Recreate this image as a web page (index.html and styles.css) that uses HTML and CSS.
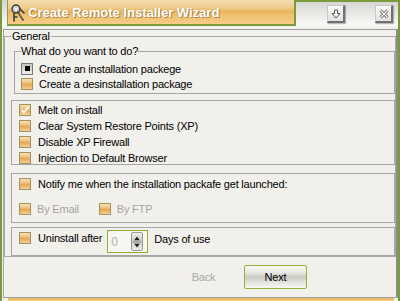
FILE: index.html
```html
<!DOCTYPE html>
<html>
<head>
<meta charset="utf-8">
<link rel="stylesheet" href="styles.css">
</head>
<body>
<div class="window">
  <div class="titlebar">
    <div class="tab">
      <svg class="appicon" width="14" height="18" viewBox="0 0 14 18">
        <circle cx="5" cy="5" r="4" fill="#c8c8c8" stroke="#3a3a3a" stroke-width="1.4"/>
        <circle cx="5" cy="5" r="1.6" fill="#f4f4f4"/>
        <path d="M3 9 L3 17 M3 13 L6 13 M7 8 L12 16 M9 5 L13 9" fill="none" stroke="#3a3a3a" stroke-width="1.6" stroke-linecap="round"/>
        <path d="M8 9 L12 15" fill="none" stroke="#9a9a9a" stroke-width="0.8"/>
      </svg>
      <span class="title">Create Remote Installer Wizard</span>
    </div>
    <div class="controls">
      <div class="tbtn">
        <svg width="10" height="10" viewBox="0 0 10 10"><path d="M3.5 1 H6.5 V4.5 H9 L5 9 L1 4.5 H3.5 Z" fill="#fff" stroke="#555" stroke-width="1"/></svg>
      </div>
      <div class="tbtn">
        <svg width="10" height="10" viewBox="0 0 10 10"><path d="M1.5 1.5 L8.5 8.5 M8.5 1.5 L1.5 8.5" stroke="#555" stroke-width="3"/><path d="M1.5 1.5 L8.5 8.5 M8.5 1.5 L1.5 8.5" stroke="#fff" stroke-width="1.4"/></svg>
      </div>
    </div>
  </div>
  <div class="panel">
    <fieldset class="general">
      <legend>General</legend>
      <fieldset class="what">
        <legend>What do you want to do?</legend>
        <div class="row radiorow"><span class="radio on"><span class="dot"></span></span><span>Create an installation packege</span></div>
        <div class="row radiorow"><span class="chk"></span><span>Create a desinstallation package</span></div>
      </fieldset>
      <div class="box options">
        <div class="row"><span class="chk checked"><svg width="10" height="10" viewBox="0 0 10 10"><path d="M1.5 5 L4 7.5 L8.5 2" fill="none" stroke="#fff" stroke-width="1.8"/></svg></span><span>Melt on install</span></div>
        <div class="row"><span class="chk"></span><span>Clear System Restore Points (XP)</span></div>
        <div class="row"><span class="chk"></span><span>Disable XP Firewall</span></div>
        <div class="row"><span class="chk"></span><span>Injection to Default Browser</span></div>
      </div>
      <div class="box notify">
        <div class="row"><span class="chk"></span><span>Notify me when the installation packafe get launched:</span></div>
        <div class="row sub">
          <span class="opt"><span class="chk"></span><span class="dis">By Email</span></span>
          <span class="opt"><span class="chk"></span><span class="dis">By FTP</span></span>
        </div>
      </div>
      <div class="box uninstall">
        <div class="row top"><span class="chk"></span><span>Uninstall after</span></div>
        <div class="spin">
          <span class="spinval">0</span>
          <span class="spinbtns">
            <svg width="11" height="18" viewBox="0 0 11 18"><path d="M2.5 7 L5.5 3 L8.5 7 Z M2.5 11 L5.5 15 L8.5 11 Z" fill="#222"/><path d="M1 9 H10" stroke="#888" stroke-width="1"/></svg>
          </span>
        </div>
        <span class="days">Days of use</span>
      </div>
    </fieldset>
    <div class="footer">
      <div class="btn back">Back</div>
      <div class="btn next">Next</div>
    </div>
  </div>
  <div class="strip"></div>
</div>
</body>
</html>
```
FILE: styles.css
```css
* { box-sizing: border-box; }
html, body { margin: 0; padding: 0; }
body {
  width: 400px;
  height: 301px;
  overflow: hidden;
  background: #f2f0eb;
  font-family: "Liberation Sans", Arial, sans-serif;
  font-size: 11px;
  letter-spacing: -0.2px;
  color: #000;
}
.window {
  height: 301px;
  display: flex;
  flex-direction: column;
  border-left: 2px solid #7b9a3c;
  border-right: 2px solid #7b9a3c;
}
.titlebar {
  height: 26px;
  display: flex;
  background: linear-gradient(#d4d4d0, #ebebe8 60%, #fbfbfa);
}
.tab {
  margin-left: 5px;
  width: 289px;
  height: 26px;
  display: flex;
  align-items: center;
  gap: 3px;
  padding-left: 3px;
  border-left: 1px solid #8a9a5a;
  border-right: 2px solid #7b9a3c;
  border-bottom: 2px solid #7b9a3c;
  background: linear-gradient(#f3dcae 0%, #f0cf90 30%, #e8b55c 48%, #f0c070 62%, #f7cd88 100%);
}
.appicon { margin-top: 1px; }
.title {
  font-weight: bold;
  font-size: 13px;
  letter-spacing: 0;
  color: #fff;
  text-shadow: 1px 1px 0 rgba(150, 110, 50, 0.7), -1px 0 0 rgba(170, 130, 70, 0.35);
}
.controls {
  flex: 1;
  display: flex;
  border-top: 2px solid #7b9a3c;
  padding: 3px 4px 0 31px;
  gap: 30px;
}
.tbtn {
  width: 18px;
  height: 18px;
  display: flex;
  align-items: center;
  justify-content: center;
  background: linear-gradient(#fafafa, #e2e2e0);
  border: 1px solid #c8c8c8;
  border-right: 2px solid #707070;
  border-bottom: 2px solid #707070;
  box-shadow: 1px 1px 1px rgba(0,0,0,0.25);
}
.panel {
  flex: 1;
  margin-top: 3px;
  margin-left: 1px;
  display: flex;
  flex-direction: column;
  border-top: 1px solid #9e9e9e;
  border-left: 1px solid #a6a6a6;
  border-bottom: 1px solid #a0a0a0;
  border-right: 2px solid #8c8c8c;
}
fieldset {
  margin: 0;
  min-width: 0;
}
legend {
  line-height: 13px;
  padding: 0 1px;
}
.general {
  border: 1px solid #a8a8a8;
  padding: 2px 0 0 6px;
}
.what {
  margin-left: 3px;
  border: 1px solid #a4a4a4;
  padding: 3px 0 2px 6px;
}
.what legend { padding: 0; }
.row {
  display: flex;
  align-items: center;
  gap: 7px;
  height: 12px;
  line-height: 12px;
  white-space: nowrap;
}
.radiorow { height: 15px; gap: 6px; }
.chk {
  width: 12px;
  height: 12px;
  flex: none;
  display: flex;
  align-items: center;
  justify-content: center;
  border: 1px solid #a09560;
  background: linear-gradient(#f8dfb4 0%, #efc484 35%, #e5a955 55%, #eebb74 80%, #f5d29a 100%);
}
.radio {
  width: 12px;
  height: 12px;
  flex: none;
  display: flex;
  align-items: center;
  justify-content: center;
  border: 1px solid #7a7a7a;
  background: linear-gradient(#c4c4c2, #eeeeec);
}
.dot { width: 5px; height: 5px; background: #000; }
.box {
  border: 1px solid #a6a6a6;
  padding-left: 7px;
}
.options {
  margin-top: 6px;
  padding-top: 3px;
  display: flex;
  flex-direction: column;
  gap: 4px;
}
.notify {
  margin-top: 8px;
  padding-top: 4px;
  padding-bottom: 7px;
  display: flex;
  flex-direction: column;
  gap: 13px;
}
.sub { gap: 20px; }
.opt { display: flex; align-items: center; gap: 6px; }
.dis { color: #a4a4a0; }
.uninstall {
  margin-top: 4px;
  padding-top: 2px;
  padding-bottom: 2px;
  display: flex;
  align-items: flex-start;
}
.row.top { margin-top: 2px; }
.uninstall .row.top span:last-child { line-height: 14px; }
.spin {
  margin-left: 5px;
  width: 41px;
  height: 23px;
  border: 1px solid #93ad2e;
  background: #f7f6f2;
  display: flex;
  align-items: center;
  padding-left: 3px;
}
.spinval { color: #b0b0ac; font-size: 12px; flex: 1; margin-top: 1px; }
.spinbtns {
  width: 12px;
  height: 19px;
  margin-right: 4px;
  border: 1px solid #9a9a9a;
  border-radius: 2px;
  background: linear-gradient(#f0f0ee, #c8c8c4 50%, #f0f0ee);
  display: flex;
  align-items: center;
  justify-content: center;
}
.days { margin-left: 6px; line-height: 14px; margin-top: 2px; }
.footer {
  flex: 1;
  display: flex;
  justify-content: flex-end;
  gap: 9px;
  padding: 8px 89px 0 0;
}
.btn {
  width: 63px;
  height: 24px;
  display: flex;
  align-items: center;
  justify-content: center;
}
.back { color: #a8a8a4; }
.next {
  border: 1px solid #93b23c;
  border-radius: 2px;
  background: linear-gradient(#fafaf7 0%, #e8e8e3 30%, #c9c9c2 50%, #e4e4df 75%, #f6f6f2 100%);
}
.strip {
  height: 3px;
  margin-left: 6px;
  margin-right: 4px;
  background: linear-gradient(#e8b860, #f7c97e);
}
```
